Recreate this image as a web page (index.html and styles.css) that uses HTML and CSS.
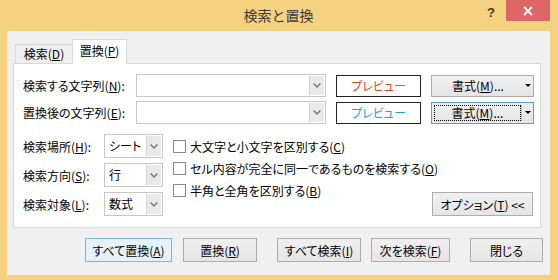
FILE: index.html
```html
<!DOCTYPE html>
<html lang="ja">
<head>
    <meta charset="UTF-8">
    <meta name="viewport" content="width=device-width, initial-scale=1.0">
    <title>検索と置換</title>
    <link rel="stylesheet" href="styles.css">
</head>
<body>
    <div class="window">
        <div class="titlebar">
            <span></span>
            <span class="title">検索と置換</span>
            <div class="controls">
                <span class="help">?</span>
                <span class="close">
                    <svg width="10" height="10" viewBox="0 0 10 10">
                        <path d="M1 1L9 9M9 1L1 9" stroke="#fff" stroke-width="1.8"/>
                    </svg>
                </span>
            </div>
        </div>

        <div class="client">
            <div class="tabs">
                <div class="tab">検索(<u>D</u>)</div>
                <div class="tab active">置換(<u>P</u>)</div>
            </div>

            <div class="panel">
                <div class="field-row">
                    <label class="field-label">検索する文字列(<u>N</u>):</label>
                    <div class="combo">
                        <span class="drop">
                            <svg width="8" height="5" viewBox="0 0 8 5"><path d="M0.6 0.6L4 4L7.4 0.6" fill="none" stroke="#767676" stroke-width="1.4"/></svg>
                        </span>
                    </div>
                    <div class="preview find">プレビュー</div>
                    <button class="btn split">
                        <span class="split-main">書式(<u>M</u>)...</span>
                        <span class="split-arrow"></span>
                    </button>
                </div>
                <div class="field-row">
                    <label class="field-label">置換後の文字列(<u>E</u>):</label>
                    <div class="combo">
                        <span class="drop">
                            <svg width="8" height="5" viewBox="0 0 8 5"><path d="M0.6 0.6L4 4L7.4 0.6" fill="none" stroke="#767676" stroke-width="1.4"/></svg>
                        </span>
                    </div>
                    <div class="preview replace">プレビュー</div>
                    <button class="btn split focused">
                        <span class="split-main">書式(<u>M</u>)...</span>
                        <span class="split-arrow"></span>
                    </button>
                </div>

                <div class="options">
                    <div class="scope">
                        <div class="scope-row">
                            <label class="scope-label">検索場所(<u>H</u>):</label>
                            <div class="select">
                                <span class="select-text">シート</span>
                                <span class="drop">
                                    <svg width="8" height="5" viewBox="0 0 8 5"><path d="M0.6 0.6L4 4L7.4 0.6" fill="none" stroke="#767676" stroke-width="1.4"/></svg>
                                </span>
                            </div>
                        </div>
                        <div class="scope-row">
                            <label class="scope-label">検索方向(<u>S</u>):</label>
                            <div class="select">
                                <span class="select-text">行</span>
                                <span class="drop">
                                    <svg width="8" height="5" viewBox="0 0 8 5"><path d="M0.6 0.6L4 4L7.4 0.6" fill="none" stroke="#767676" stroke-width="1.4"/></svg>
                                </span>
                            </div>
                        </div>
                        <div class="scope-row">
                            <label class="scope-label">検索対象(<u>L</u>):</label>
                            <div class="select">
                                <span class="select-text">数式</span>
                                <span class="drop">
                                    <svg width="8" height="5" viewBox="0 0 8 5"><path d="M0.6 0.6L4 4L7.4 0.6" fill="none" stroke="#767676" stroke-width="1.4"/></svg>
                                </span>
                            </div>
                        </div>
                    </div>

                    <div class="checks">
                        <label class="check"><span class="box"></span>大文字と小文字を区別する(<u>C</u>)</label>
                        <label class="check"><span class="box"></span>セル内容が完全に同一であるものを検索する(<u>O</u>)</label>
                        <label class="check"><span class="box"></span>半角と全角を区別する(<u>B</u>)</label>
                    </div>

                    <button class="btn opt-btn">オプション(<u>T</u>) &lt;&lt;</button>
                </div>
            </div>

            <div class="actions">
                <button class="btn default w-all-replace">すべて置換(<u>A</u>)</button>
                <button class="btn w-replace">置換(<u>R</u>)</button>
                <button class="btn w-find-all">すべて検索(<u>I</u>)</button>
                <button class="btn w-find-next">次を検索(<u>F</u>)</button>
                <button class="btn w-close">閉じる</button>
            </div>
        </div>
    </div>
</body>
</html>
```

FILE: styles.css
```css
body {
    margin: 0;
    font-family: "Noto Sans CJK JP", "Noto Sans", sans-serif;
    font-size: 12px;
    color: #000;
}
.window {
    width: 558px;
    height: 280px;
    box-sizing: border-box;
    background-color: #f5d27f;
    padding: 0 8px 5px 7px;
    display: flex;
    flex-direction: column;
}
.titlebar {
    height: 31px;
    flex-shrink: 0;
    display: grid;
    grid-template-columns: 1fr auto 1fr;
}
.title {
    font-size: 14px;
    line-height: 30px;
    color: #3a3a3a;
}
.controls {
    justify-self: end;
    display: flex;
    align-items: flex-start;
}
.help {
    font-family: "Liberation Sans", sans-serif;
    font-weight: bold;
    font-size: 13px;
    line-height: 13px;
    color: #3a3a3a;
    margin: 6px 11px 0 0;
}
.close {
    width: 44px;
    height: 21px;
    background-color: #de6666;
    display: flex;
    align-items: center;
    justify-content: center;
}
.client {
    flex: 1;
    background-color: #f0f0f0;
    padding: 0 9px 0 6px;
    display: flex;
    flex-direction: column;
    font-feature-settings: "palt";
}
.tabs {
    height: 32px;
    flex-shrink: 0;
    box-sizing: border-box;
    padding-left: 2px;
    display: flex;
    align-items: flex-end;
}
.tab {
    width: 58px;
    height: 19px;
    box-sizing: border-box;
    border: 1px solid #d9d9d9;
    border-bottom: none;
    background-color: #f0f0f0;
    text-align: center;
    line-height: 18px;
}
.tab.active {
    position: relative;
    z-index: 1;
    width: 55px;
    height: 25px;
    margin-left: -1px;
    margin-bottom: -1px;
    background-color: #fff;
    line-height: 22px;
}
.panel {
    border: 1px solid #d9d9d9;
    background-color: #fff;
    padding: 10px 6px 11px 9px;
}
.field-row {
    display: flex;
    align-items: center;
    height: 23px;
}
.field-row + .field-row {
    margin-top: 4px;
}
.field-label {
    width: 113px;
}
.combo {
    width: 190px;
    height: 23px;
    box-sizing: border-box;
    border: 1px solid #c6c6c6;
    display: flex;
    justify-content: flex-end;
}
.drop {
    width: 16px;
    box-sizing: border-box;
    background-color: #e9e9e9;
    border: 1px solid #fff;
    border-left: 1px solid #d4d4d4;
    display: flex;
    align-items: center;
    justify-content: center;
}
.preview {
    width: 85px;
    height: 22px;
    margin-left: 10px;
    box-sizing: border-box;
    border: 1px solid #222;
    display: flex;
    align-items: center;
    justify-content: center;
}
.preview.find {
    color: #e44a1c;
}
.preview.replace {
    color: #1ba2dc;
}
.btn {
    font: inherit;
    font-feature-settings: "palt";
    color: #000;
    height: 24px;
    padding: 0;
    box-sizing: border-box;
    border: 1px solid #adadad;
    background: linear-gradient(#f0f0f0, #e5e5e5);
}
.split {
    width: 103px;
    height: 22px;
    margin-left: 10px;
    display: flex;
    align-items: stretch;
}
.split-main {
    flex: 1;
    display: flex;
    align-items: center;
    justify-content: center;
    padding-left: 2px;
}
.split-arrow {
    width: 11px;
    display: flex;
    align-items: center;
    justify-content: center;
}
.split-arrow::after {
    content: "";
    border-left: 3px solid transparent;
    border-right: 3px solid transparent;
    border-top: 3px solid #000;
}
.split.focused {
    border-color: #569de5;
}
.split.focused .split-main {
    margin: 2px 0 2px 2px;
    padding-left: 0;
    border: 1px dotted #000;
}
.split.focused .split-arrow {
    border-left: 1px solid #c2c2c2;
    margin: 2px 0;
}
.options {
    display: flex;
    margin-top: 10px;
}
.scope {
    display: flex;
    flex-direction: column;
    gap: 5px;
}
.scope-row {
    display: flex;
    align-items: center;
}
.scope-label {
    width: 81px;
}
.select {
    width: 59px;
    height: 24px;
    box-sizing: border-box;
    border: 1px solid #c6c6c6;
    display: flex;
}
.select-text {
    flex: 1;
    padding-left: 4px;
    line-height: 22px;
}
.checks {
    flex: 1;
    min-width: 0;
    margin-left: 10px;
    padding-top: 1px;
    display: flex;
    flex-direction: column;
}
.check {
    height: 22px;
    white-space: nowrap;
    display: flex;
    align-items: center;
}
.box {
    width: 13px;
    height: 13px;
    flex-shrink: 0;
    box-sizing: border-box;
    border: 1px solid #8a8a8a;
    background-color: #fff;
    margin-right: 4px;
}
.opt-btn {
    align-self: flex-end;
    flex-shrink: 0;
    width: 101px;
    margin-right: 1px;
}
.actions {
    display: flex;
    justify-content: flex-end;
    margin: 10px -2px 0 0;
}
.btn.default {
    background: #e5f1fb;
    border-color: #7eb4ea;
}
.w-all-replace {
    width: 87px;
}
.w-replace {
    width: 74px;
    margin-left: 11px;
}
.w-find-all {
    width: 84px;
    margin-left: 20px;
}
.w-find-next {
    width: 79px;
    margin-left: 10px;
}
.w-close {
    width: 73px;
    margin-left: 20px;
}
```
